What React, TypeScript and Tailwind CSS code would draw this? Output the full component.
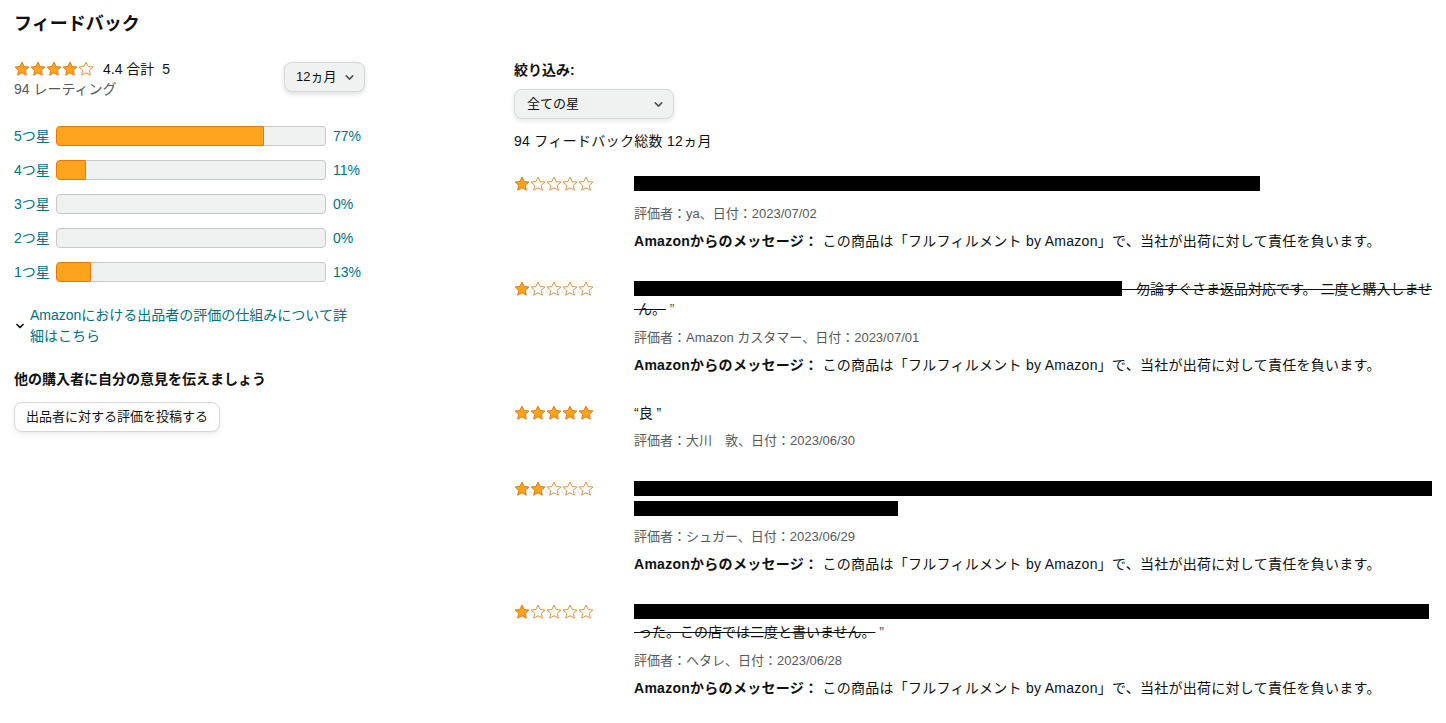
import React from "react";
import { ChevronDown } from "lucide-react";

const STAR = "8,1.1 10.1,5.5 14.9,6.05 11.3,9.35 12.3,14.2 8,11.75 3.7,14.2 4.7,9.35 1.1,6.05 5.9,5.5";

function Stars({ n }: { n: number }) {
  return (
    <div className="flex items-center">
      {[0, 1, 2, 3, 4].map((i) => (
        <svg key={i} width="16" height="16" viewBox="0 0 16 16" className="block">
          <polygon
            points={STAR}
            fill={i < n ? "#FFA41C" : "#ffffff"}
            stroke={i < n ? "#E47911" : "#E8913A"}
            strokeWidth="1"
            strokeLinejoin="round"
          />
        </svg>
      ))}
    </div>
  );
}

const bars = [
  { label: "5つ星", pct: 77 },
  { label: "4つ星", pct: 11 },
  { label: "3つ星", pct: 0 },
  { label: "2つ星", pct: 0 },
  { label: "1つ星", pct: 13 },
];

function Bar({ pct }: { pct: number }) {
  const w = Math.round((pct / 100) * 270);
  return (
    <div className="flex h-[20px] w-[270px]">
      {pct > 0 && (
        <div
          className="h-full rounded-l-[4px] border border-[#E47911] bg-[#FFA41C]"
          style={{ width: w }}
        />
      )}
      <div
        className={
          pct > 0
            ? "h-full flex-1 rounded-r-[4px] border border-l-0 border-[#c7c9c9] bg-[#f0f2f2]"
            : "h-full flex-1 rounded-[4px] border border-[#c7c9c9] bg-[#f0f2f2]"
        }
      />
    </div>
  );
}

function Message() {
  return (
    <div className="mt-[7px] h-[20px] whitespace-nowrap text-[14px] leading-[20px] tracking-[0.27px] text-[#0f1111]">
      <span className="font-bold">Amazonからのメッセージ：</span> この商品は「フルフィルメント by Amazon」で、当社が出荷に対して責任を負います。
    </div>
  );
}

function Meta({ text }: { text: string }) {
  return <div className="mt-[10px] h-[20px] text-[13px] leading-[20px] text-[#565959]">{text}</div>;
}

function Review({
  stars,
  children,
  meta,
  message = true,
}: {
  stars: number;
  children: React.ReactNode;
  meta: string;
  message?: boolean;
}) {
  return (
    <div className="flex">
      <div className="w-[120px] shrink-0 pt-[2px]">
        <Stars n={stars} />
      </div>
      <div className="flex-1">
        <div className="text-[14px] leading-[20px] text-[#0f1111]">{children}</div>
        <Meta text={meta} />
        {message && <Message />}
      </div>
    </div>
  );
}

export default function App() {
  return (
    <div
      className="min-h-[723px] w-[1446px] bg-white px-[14px] pt-[12px] text-[#0f1111]"
      style={{ fontFamily: '"Liberation Sans", "Noto Sans CJK JP", sans-serif' }}
    >
      <h1 className="h-[24px] text-[18px] font-bold leading-[24px]">フィードバック</h1>
      <div className="flex">
        {/* Left column */}
        <div className="w-[351px] shrink-0">
          <div className="mt-[23px] flex items-start justify-between">
            <div>
              <div className="flex h-[20px] items-center">
                <Stars n={4} />
                <span className="ml-[9px] text-[14px] leading-[20px]">4.4 合計&nbsp;&nbsp;5</span>
              </div>
              <div className="h-[20px] text-[14px] leading-[20px] text-[#565959]">94 レーティング</div>
            </div>
            <div className="mt-[3px] flex h-[30px] w-[81px] items-center justify-between rounded-[8px] border border-[#d5d9d9] bg-[#f0f2f2] pl-[11px] pr-[8px] shadow-[0_2px_5px_rgba(15,17,17,0.15)]">
              <span className="text-[13px]">12ヵ月</span>
              <ChevronDown size={13} strokeWidth={3} className="text-[#555]" />
            </div>
          </div>

          <div className="mt-[27px] flex flex-col gap-[14px]">
            {bars.map((b) => (
              <div key={b.label} className="flex h-[20px] items-center">
                <span className="w-[42px] text-[14px] leading-[20px] text-[#007185]">{b.label}</span>
                <Bar pct={b.pct} />
                <span className="ml-[7px] text-[14px] leading-[20px] text-[#007185]">{b.pct}%</span>
              </div>
            ))}
          </div>

          <div className="mt-[23px] flex items-center">
            <ChevronDown size={12} strokeWidth={3.5} className="mr-[4px] shrink-0 text-[#0f1111]" />
            <span className="text-[14px] leading-[21px] text-[#007185]">
              Amazonにおける出品者の評価の仕組みについて詳
              <br />
              細はこちら
            </span>
          </div>

          <div className="mt-[22px] h-[20px] text-[14px] font-bold leading-[20px]">
            他の購入者に自分の意見を伝えましょう
          </div>
          <button className="mt-[13px] flex h-[30px] items-center rounded-[8px] border border-[#d5d9d9] bg-white px-[11px] text-[13px] shadow-[0_2px_5px_rgba(213,217,217,0.5)]">
            出品者に対する評価を投稿する
          </button>
        </div>

        {/* Right column */}
        <div className="ml-[149px] flex-1">
          <div className="mt-[24px] h-[20px] text-[14px] font-bold leading-[20px]">絞り込み:</div>
          <div className="mt-[9px] flex h-[30px] w-[160px] items-center justify-between rounded-[8px] border border-[#d5d9d9] bg-[#f0f2f2] pl-[12px] pr-[8px] shadow-[0_2px_5px_rgba(15,17,17,0.1)]">
            <span className="text-[13px]">全ての星</span>
            <ChevronDown size={13} strokeWidth={3} className="text-[#555]" />
          </div>
          <div className="mt-[12px] h-[20px] text-[14px] leading-[20px] tracking-[0.3px]">94 フィードバック総数 12ヵ月</div>

          <div className="mt-[23px] flex flex-col gap-[28px]">
            <Review stars={1} meta="評価者：ya、日付：2023/07/02">
              <div className="h-[20px] pt-[2px]">
                <div className="h-[15px] w-[626px] bg-black" />
              </div>
            </Review>

            <Review stars={1} meta="評価者：Amazon カスタマー、日付：2023/07/01">
              <div className="flex h-[20px] items-start">
                <div className="mt-[2px] h-[15px] w-[488px] shrink-0 bg-black" />
                <span className="whitespace-nowrap line-through">
                  {"\u3000勿論すぐさま返品対応です。 二度と購入しませ"}
                </span>
              </div>
              <div className="h-[19px]">
                <span className="line-through">{"\u00a0ん。"}</span>
                <span className="text-[#565959]"> ”</span>
              </div>
            </Review>

            <Review stars={5} meta="評価者：大川　敦、日付：2023/06/30" message={false}>
              <div className="h-[18px]">“良 ”</div>
            </Review>

            <Review stars={2} meta="評価者：シュガー、日付：2023/06/29">
              <div className="h-[20px] pt-[2px]">
                <div className="h-[15px] w-[798px] bg-black" />
              </div>
              <div className="h-[18px] pt-[2px]">
                <div className="h-[15px] w-[264px] bg-black" />
              </div>
            </Review>

            <Review stars={1} meta="評価者：ヘタレ、日付：2023/06/28">
              <div className="h-[20px] pt-[2px]">
                <div className="h-[15px] w-[795px] bg-black" />
              </div>
              <div className="h-[19px]">
                <span className="line-through">{"\u00a0った。この店では二度と書いません。"}</span>
                <span className="text-[#565959]"> ”</span>
              </div>
            </Review>
          </div>
        </div>
      </div>
    </div>
  );
}
